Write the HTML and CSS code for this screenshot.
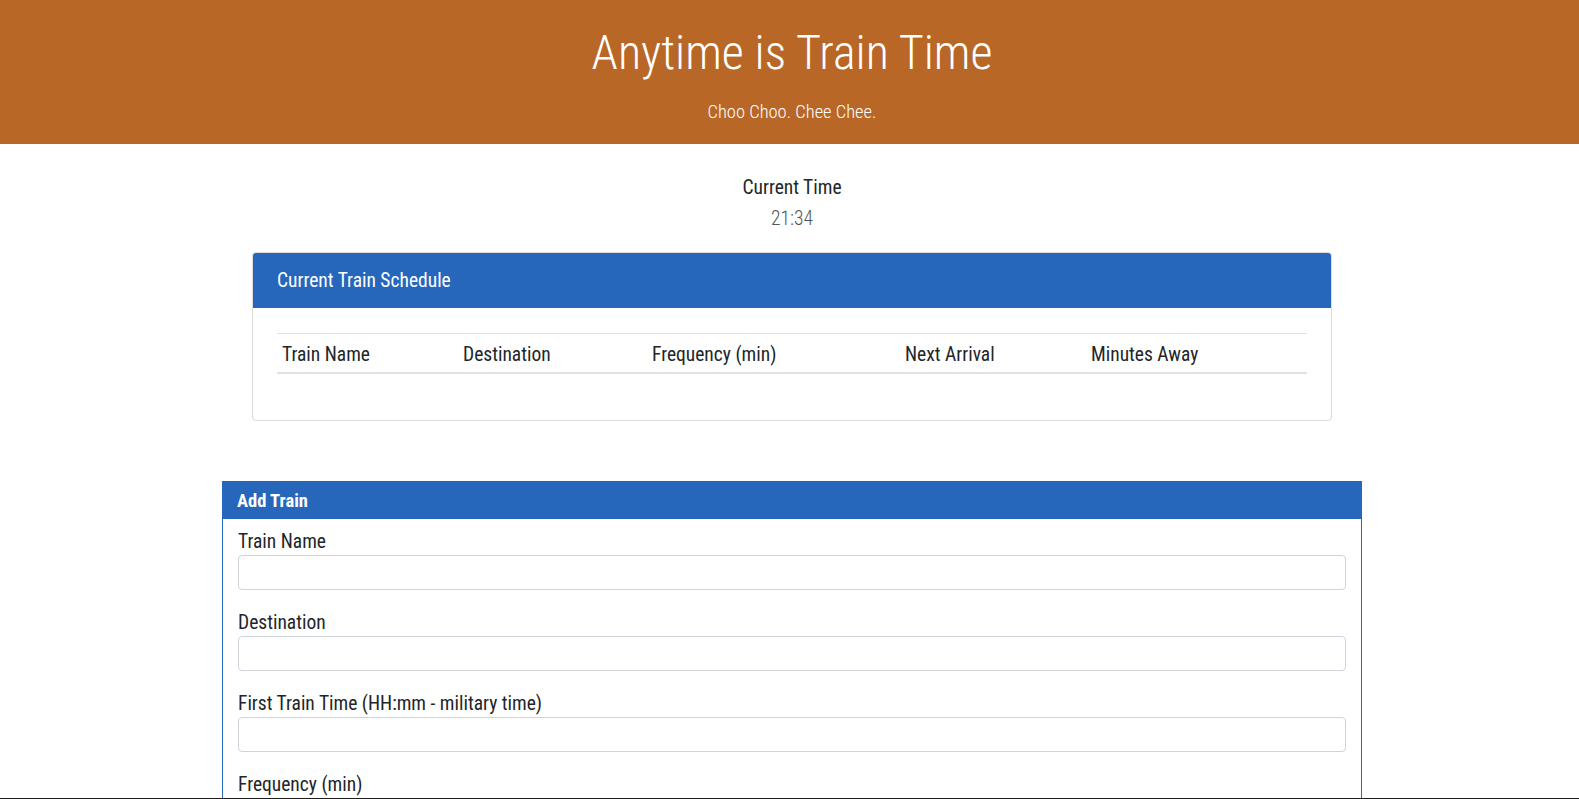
FILE: index.html
```html
<!DOCTYPE html>
<html lang="en">
<head>
<meta charset="utf-8">
<title>Anytime is Train Time</title>
<link rel="stylesheet" href="styles.css">
</head>
<body>
<header class="jumbo">
  <h1 class="jumbo-title">Anytime is Train Time</h1>
  <p class="jumbo-sub">Choo Choo. Chee Chee.</p>
</header>
<main class="page">
  <div class="container">
    <section class="clock">
      <div class="clock-label">Current Time</div>
      <div class="clock-value">21:34</div>
    </section>

    <section class="sched-card">
      <div class="sched-head">Current Train Schedule</div>
      <div class="sched-body">
        <table class="sched-table">
          <thead>
            <tr>
              <th class="c1">Train Name</th>
              <th class="c2">Destination</th>
              <th class="c3">Frequency (min)</th>
              <th class="c4">Next Arrival</th>
              <th class="c5">Minutes Away</th>
            </tr>
          </thead>
          <tbody></tbody>
        </table>
      </div>
    </section>

    <section class="add-card">
      <div class="add-head">Add Train</div>
      <form class="add-body">
        <div class="field">
          <label class="field-label" for="name">Train Name</label>
          <input class="field-input" id="name" type="text">
        </div>
        <div class="field">
          <label class="field-label" for="dest">Destination</label>
          <input class="field-input" id="dest" type="text">
        </div>
        <div class="field">
          <label class="field-label" for="first">First Train Time (HH:mm - military time)</label>
          <input class="field-input" id="first" type="text">
        </div>
        <div class="field">
          <label class="field-label" for="freq">Frequency (min)</label>
          <input class="field-input" id="freq" type="text">
        </div>
        <button class="submit-btn" type="button">Submit</button>
      </form>
    </section>
  </div>
</main>
</body>
</html>
```
FILE: styles.css
```css
* { box-sizing: border-box; }

html, body {
  margin: 0;
  padding: 0;
}

body {
  font-family: "Roboto Condensed", "Open Sans", "DejaVu Sans Condensed", sans-serif;
  font-size: 19.5px;
  color: #212529;
  background: #fff;
}

body::after {
  content: "";
  position: fixed;
  left: 0;
  right: 0;
  bottom: 0;
  height: 1px;
  background: #1b1b1b;
}

.jumbo {
  background: #b86727;
  color: #fff;
  text-align: center;
  padding: 23px 0 17px 5px;
}

.jumbo-title {
  margin: 0;
  font-size: 48px;
  line-height: 60px;
  font-weight: 300;
}

.jumbo-sub {
  margin: 14px 0 0;
  font-size: 18.5px;
  line-height: 30px;
  font-weight: 300;
}

.page {
  padding-left: 5px;
}

.container {
  width: 1140px;
  margin: 0 auto;
}

.clock {
  margin-top: 28px;
  text-align: center;
  line-height: 31px;
}

.clock-value {
  color: #555;
  font-weight: 300;
}

.sched-card {
  margin: 18px 30px 0;
  border: 1px solid #dcdcdc;
  border-radius: 4px;
  overflow: hidden;
}

.sched-head {
  background: #2667bb;
  color: #fff;
  line-height: 30px;
  padding: 13px 24px 12px;
}

.sched-body {
  padding: 25px 24px 24px;
}

.sched-table {
  width: 100%;
  border-collapse: collapse;
  margin-bottom: 22px;
  table-layout: fixed;
}

.sched-table th {
  text-align: left;
  font-weight: normal;
  line-height: 22px;
  padding: 10px 5px 6px;
  border-top: 1px solid #dee2e6;
  border-bottom: 2px solid #dee2e6;
}

.c1 { width: 181px; }
.c2 { width: 189px; }
.c3 { width: 253px; }
.c4 { width: 186px; }

.add-card {
  margin-top: 60px;
  border: 1px solid #2667bb;
}

.add-head {
  background: #2667bb;
  color: #fff;
  font-weight: bold;
  font-size: 18.5px;
  line-height: 30px;
  padding: 4px 14px 3px;
}

.add-body {
  padding: 12px 15px 15px;
}

.field {
  margin-bottom: 22px;
}

.field-label {
  display: block;
  line-height: 22px;
  margin-bottom: 2px;
}

.field-input {
  display: block;
  width: 100%;
  height: 35px;
  border: 1px solid #ced4da;
  border-radius: 4px;
  font: inherit;
  padding: 4px 12px;
}

.submit-btn {
  font: inherit;
  color: #fff;
  background: #2667bb;
  border: 1px solid #2667bb;
  border-radius: 4px;
  padding: 6px 12px;
}
```
